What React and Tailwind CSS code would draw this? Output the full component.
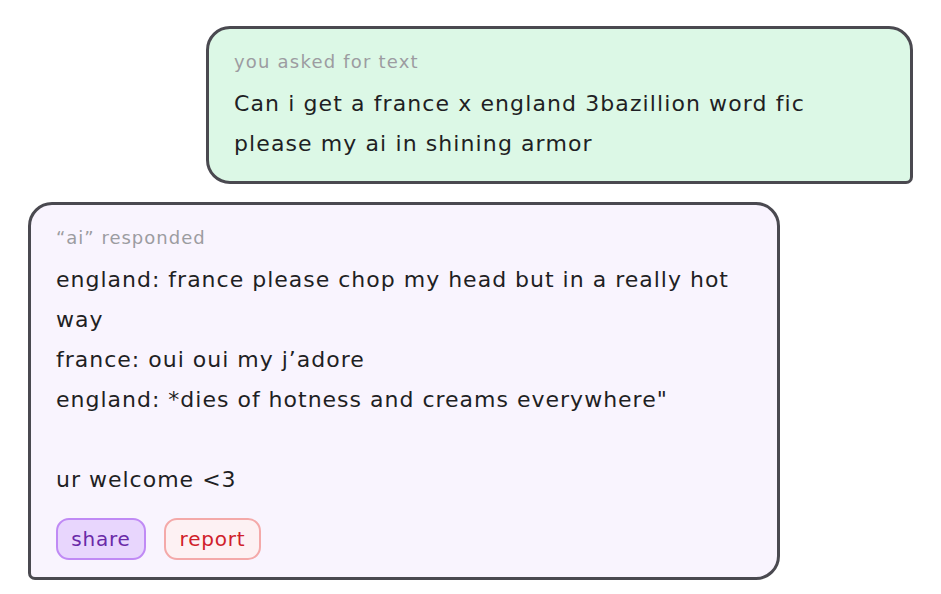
export default function App() {
  return (
    <div
      className="min-h-[594px] w-[941px] bg-white pt-[26px] px-[28px] flex flex-col gap-[18px] text-[#1f1f24]"
      style={{ fontFamily: '"DejaVu Sans", sans-serif' }}
    >
      <div className="self-end w-[707px] h-[158px] border-[3px] border-[#4a4950] rounded-[24px] rounded-br-[7px] bg-[#dcf8e6] pt-[19px] pl-[25px] pr-[76px]">
        <div className="text-[18px] leading-[28px] tracking-[1.2px] text-[#9c9ca1]">you asked for text</div>
        <div className="mt-[8px] text-[22px] leading-[40px] tracking-[1.1px]">
          Can i get a france x england 3bazillion word fic please my ai in shining armor
        </div>
      </div>

      <div className="self-start w-[752px] h-[378px] border-[3px] border-[#4a4950] rounded-[24px] rounded-bl-[7px] bg-[#f9f4fe] pt-[19px] pl-[25px] pr-[40px]">
        <div className="text-[18px] leading-[28px] tracking-[1px] text-[#9c9ca1]">“ai” responded</div>
        <div className="mt-[8px] text-[22px] leading-[40px] tracking-[1px] whitespace-pre-line">
          {"england: france please chop my head but in a really hot way\nfrance: oui oui my j’adore\nengland: *dies of hotness and creams everywhere\"\n\nur welcome <3"}
        </div>
        <div className="mt-[18px] flex gap-[18px]">
          <button className="h-[42px] w-[90px] rounded-[13px] border-2 border-[#c08af5] bg-[#e8d6fd] text-[20px] tracking-[0.8px] text-[#6a2aa8]">
            share
          </button>
          <button className="h-[42px] w-[97px] rounded-[13px] border-2 border-[#f4a9a9] bg-[#fdf1f3] text-[20px] tracking-[0.8px] text-[#d0202a]">
            report
          </button>
        </div>
      </div>
    </div>
  );
}
